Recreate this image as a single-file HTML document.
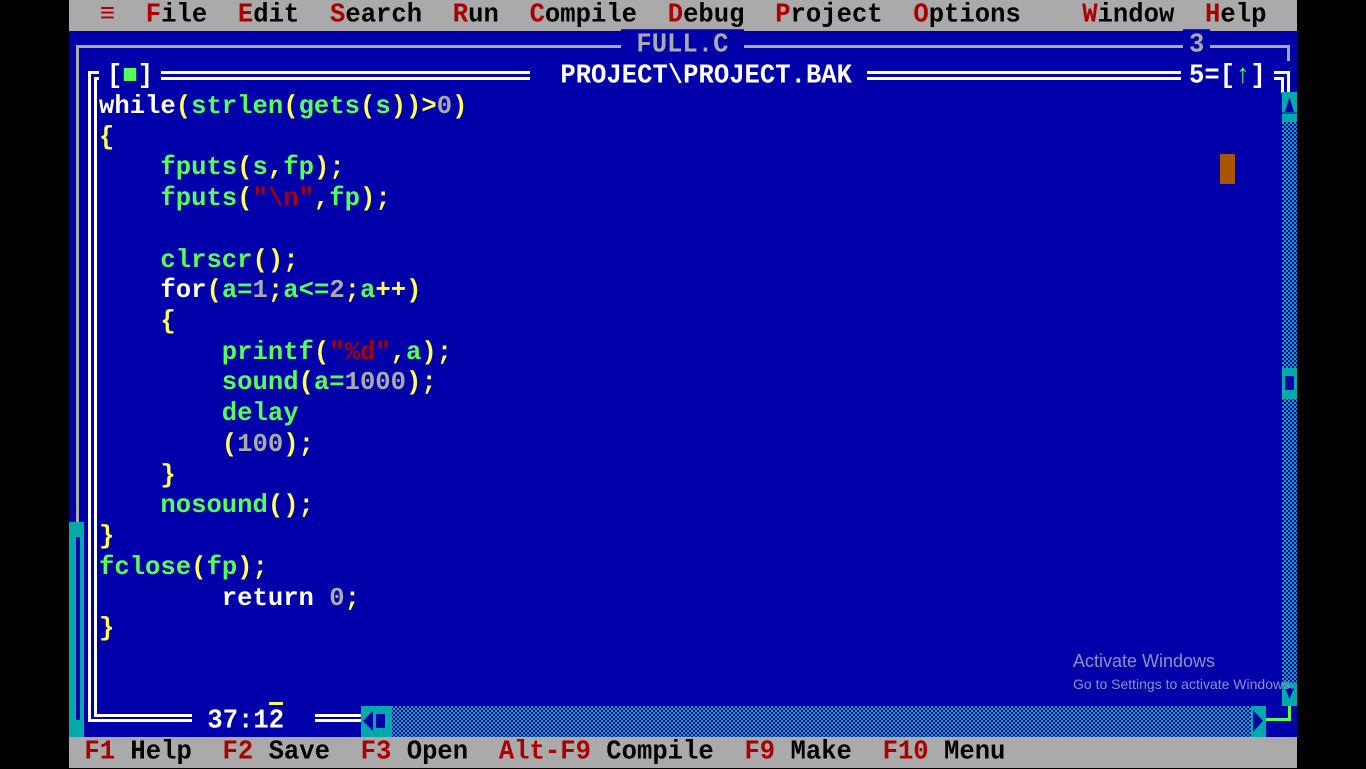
<!DOCTYPE html>
<html><head><meta charset="utf-8"><style>
*{margin:0;padding:0}
body{width:1366px;height:768px;background:#000;position:relative;overflow:hidden;font-family:"Liberation Mono",monospace;font-weight:bold;font-size:25.58px}
.a{position:absolute}
.t{position:absolute;line-height:30.72px;height:30.72px;white-space:pre;transform:scaleY(1.05)}
.g{color:#55ff55}.y{color:#ffff55}.w{color:#fff}.n{color:#aaaaaa}.r{color:#aa0000}.k{color:#000}
.dot{background-color:#0000aa;background-image:repeating-conic-gradient(#00aaaa 0 25%,#0000aa 0 50%);background-size:4px 4px}
</style></head><body>
<div class="a" style="left:69px;top:0;width:1228px;height:31px;background:#aaaaaa"></div>
<div class="t k" style="left:69px;top:0">  <span class="r">≡</span>  <span class="r">F</span>ile  <span class="r">E</span>dit  <span class="r">S</span>earch  <span class="r">R</span>un  <span class="r">C</span>ompile  <span class="r">D</span>ebug  <span class="r">P</span>roject  <span class="r">O</span>ptions    <span class="r">W</span>indow  <span class="r">H</span>elp</div>
<div class="a" style="left:69px;top:31px;width:1228px;height:706px;background:#0000aa"></div>
<!-- back window -->
<div class="a" style="left:76px;top:45px;width:1214px;height:3px;background:#aaaaaa"></div>
<div class="a" style="left:1287px;top:45px;width:3px;height:16px;background:#aaaaaa"></div>
<div class="a" style="left:76px;top:45px;width:3px;height:480px;background:#aaaaaa"></div>
<div class="t n" style="left:621px;top:30px;background:#0000aa"> FULL.C </div>
<div class="t n" style="left:1183px;top:30px;background:#0000aa;padding:0 6px">3</div>
<div class="a" style="left:69px;top:522px;width:15px;height:215px;background:#00aaaa"></div>
<div class="a" style="left:76px;top:537px;width:4px;height:183px;background:#0000aa"></div>
<!-- front frame -->
<div class="a" style="left:88px;top:71px;width:1202px;height:3px;background:#fff"></div>
<div class="a" style="left:94px;top:77px;width:1190px;height:3px;background:#fff"></div>
<div class="a" style="left:88px;top:71px;width:3px;height:651px;background:#fff"></div>
<div class="a" style="left:94px;top:77px;width:3px;height:639px;background:#fff"></div>
<div class="a" style="left:88px;top:719px;width:273px;height:3px;background:#fff"></div>
<div class="a" style="left:94px;top:714px;width:267px;height:3px;background:#fff"></div>
<div class="a" style="left:1287px;top:71px;width:3px;height:22px;background:#fff"></div>
<div class="a" style="left:1281px;top:77px;width:3px;height:16px;background:#fff"></div>
<div class="t w" style="left:99px;top:61px;background:#0000aa;padding:0 8px">[<span class="g">■</span>]</div>
<div class="t w" style="left:530px;top:61px;background:#0000aa;padding:0 0 0 15px"> PROJECT\PROJECT.BAK </div>
<div class="t w" style="left:1181px;top:61px;background:#0000aa;padding:0 8px 0 8px">5=[<span class="g">↑</span>]</div>
<div class="t w" style="left:192px;top:706px;background:#0000aa;padding:0 16px 0 0"> 37:12 </div>
<div class="a" style="left:269px;top:702px;width:14px;height:3px;background:#ffff55"></div>
<!-- code -->
<div class="a" style="left:99px;top:92px;line-height:30.72px;white-space:pre"><span class="w">while</span><span class="y">(</span><span class="g">strlen</span><span class="y">(</span><span class="g">gets</span><span class="y">(</span><span class="g">s</span><span class="y">))&gt;</span><span class="n">0</span><span class="y">)</span>
<span class="y">{</span>
    <span class="g">fputs</span><span class="y">(</span><span class="g">s</span><span class="y">,</span><span class="g">fp</span><span class="y">);</span>
    <span class="g">fputs</span><span class="y">(</span><span class="r">"\n"</span><span class="y">,</span><span class="g">fp</span><span class="y">);</span>

    <span class="g">clrscr</span><span class="y">();</span>
    <span class="w">for</span><span class="y">(</span><span class="g">a=</span><span class="n">1</span><span class="y">;</span><span class="g">a&lt;=</span><span class="n">2</span><span class="y">;</span><span class="g">a</span><span class="y">++)</span>
    <span class="y">{</span>
        <span class="g">printf</span><span class="y">(</span><span class="r">"%d"</span><span class="y">,</span><span class="g">a</span><span class="y">);</span>
        <span class="g">sound</span><span class="y">(</span><span class="g">a=</span><span class="n">1000</span><span class="y">);</span>
        <span class="g">delay</span>
        <span class="y">(</span><span class="n">100</span><span class="y">);</span>
    <span class="y">}</span>
    <span class="g">nosound</span><span class="y">();</span>
<span class="y">}</span>
<span class="g">fclose</span><span class="y">(</span><span class="g">fp</span><span class="y">);</span>
        <span class="w">return</span> <span class="n">0</span><span class="y">;</span>
<span class="y">}</span></div>
<div class="a" style="left:1220px;top:154px;width:15px;height:30px;background:#aa5500"></div>
<!-- right scrollbar -->
<div class="a dot" style="left:1282px;top:92px;width:15px;height:614px"></div>
<div class="a" style="left:1282px;top:92px;width:15px;height:30px;background:#00aaaa"></div>
<svg class="a" style="left:1282px;top:92px" width="15" height="30"><path d="M7.5 5 L12 20 L3 20 Z" fill="#0000aa"/><rect x="0" y="20" width="15" height="2" fill="#0000aa" opacity=".5"/></svg>
<div class="a" style="left:1282px;top:368px;width:15px;height:31px;background:#00aaaa"></div>
<div class="a" style="left:1285px;top:376px;width:9px;height:14px;background:#0000aa"></div>
<div class="a" style="left:1282px;top:683px;width:15px;height:23px;background:#00aaaa"></div>
<svg class="a" style="left:1282px;top:683px" width="15" height="23"><path d="M3 5 L12 5 L7.5 16 Z" fill="#0000aa"/></svg>
<!-- bottom scrollbar -->
<div class="a dot" style="left:361px;top:706px;width:905px;height:31px"></div>
<div class="a" style="left:361px;top:706px;width:31px;height:31px;background:#00aaaa"></div>
<svg class="a" style="left:361px;top:706px" width="31" height="31"><path d="M2 15 L12 5 L12 25 Z" fill="#0000aa"/><rect x="15" y="8" width="9" height="14" fill="#0000aa"/></svg>
<div class="a" style="left:1251px;top:706px;width:15px;height:31px;background:#00aaaa"></div>
<svg class="a" style="left:1251px;top:706px" width="15" height="31"><path d="M2 4 L12 15 L2 26 Z" fill="#0000aa"/></svg>
<div class="a" style="left:1266px;top:718px;width:24px;height:3px;background:#55ff55"></div>
<div class="a" style="left:1288px;top:706px;width:3px;height:15px;background:#55ff55"></div>
<!-- status -->
<div class="a" style="left:69px;top:737px;width:1228px;height:31px;background:#aaaaaa"></div>
<div class="t k" style="left:69px;top:737px"> <span class="r">F1</span> Help  <span class="r">F2</span> Save  <span class="r">F3</span> Open  <span class="r">Alt-F9</span> Compile  <span class="r">F9</span> Make  <span class="r">F10</span> Menu</div>
<div class="a" style="left:1073px;top:651px;font-family:'Liberation Sans',sans-serif;font-weight:normal;font-size:18px;color:#8f8fc8">Activate Windows</div>
<div class="a" style="left:1073px;top:676px;font-family:'Liberation Sans',sans-serif;font-weight:normal;font-size:14px;color:#8f8fc8">Go to Settings to activate Windows.</div>
</body></html>
